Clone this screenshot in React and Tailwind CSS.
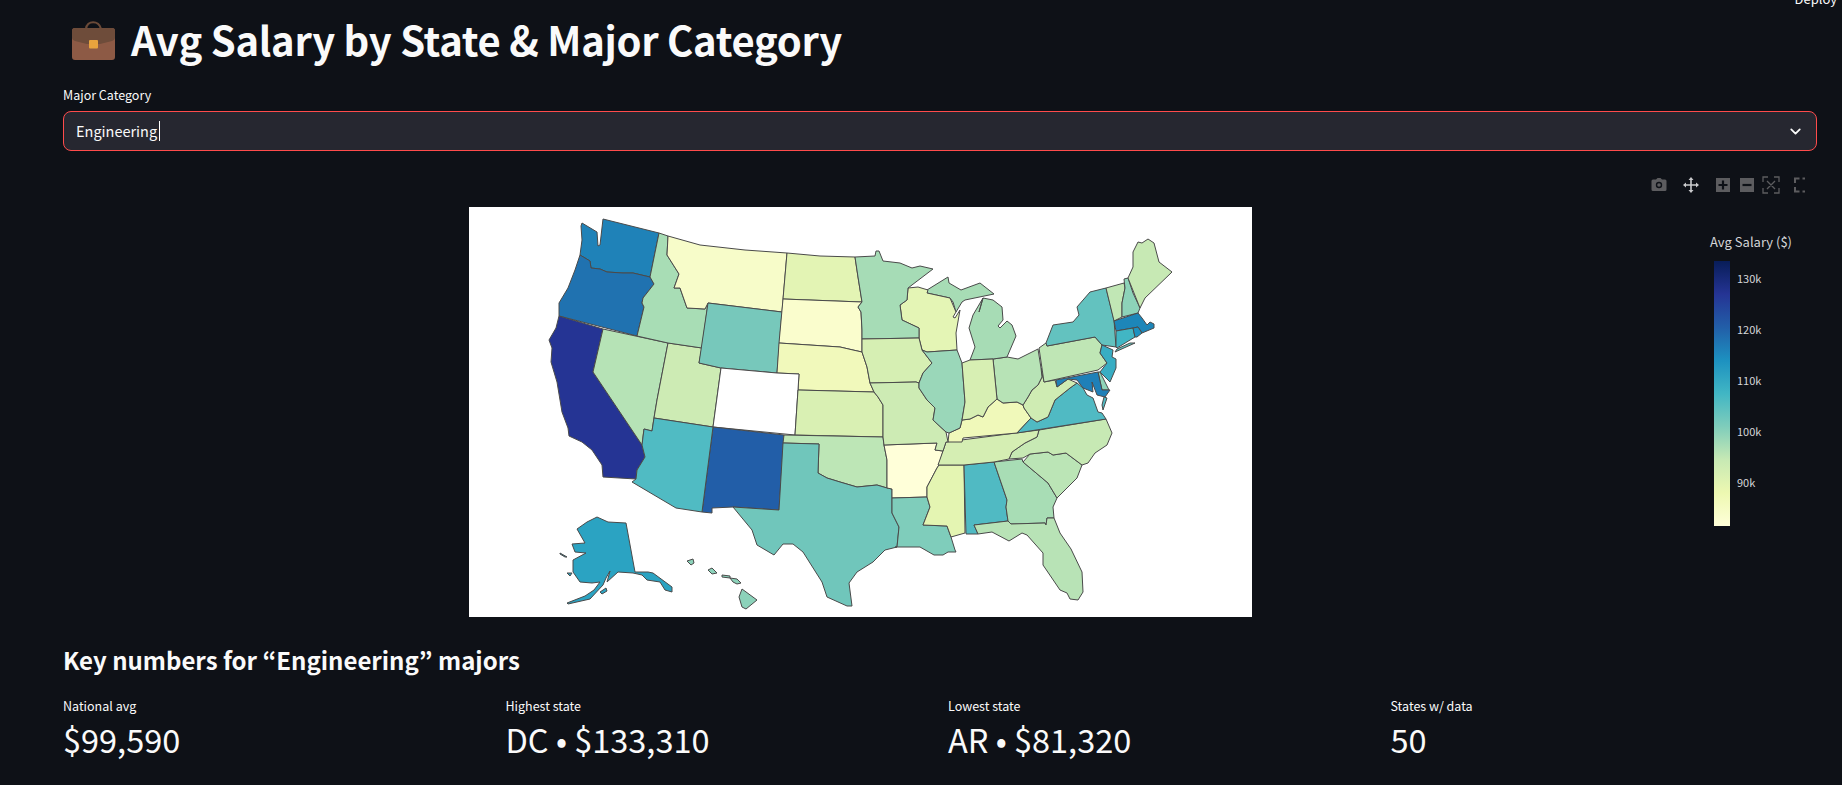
import { ChevronDown } from "lucide-react"

const FONT = "font-['Noto_Sans_CJK_KR','Noto_Sans',sans-serif]"

const states = [
  { id: "WA", fill: "#1f82b8", pts: "582,223 597,232 598,246 600,245 603,219 659,233 650,277 633,273 623,273 607,272 600,269 591,268 590,261 580,255 582,240 581,226" },
  { id: "OR", fill: "#2072b0", pts: "580,255 590,261 591,268 600,269 607,272 623,273 633,273 650,277 654,284 643,298 642,303 644,307 637,336 559,316 559,303 568,288 575,270" },
  { id: "CA", fill: "#253494", pts: "559,316 603,329 593,372 642,445 645,457 637,470 636,479 603,477 602,465 592,450 582,442 569,436 568,428 562,412 558,388 557,382 551,362 552,348 549,340 556,328" },
  { id: "NV", fill: "#b6e3b6", pts: "603,329 668,343 657,400 654,418 652,431 644,429 642,445 593,372" },
  { id: "UT", fill: "#cdebb4", pts: "668,343 702,348 699,363 721,368 713,427 654,418 657,400" },
  { id: "ID", fill: "#a8ddb5", pts: "659,233 668,236 667,255 679,274 674,288 680,288 687,308 705,309 708,303 702,348 668,343 637,336 644,307 642,303 643,298 654,284 650,277" },
  { id: "MT", fill: "#f7fcc9", pts: "668,236 700,245 745,250 787,253 782,312 708,303 705,309 687,308 680,288 674,288 679,274 667,255" },
  { id: "WY", fill: "#77c8bb", pts: "708,303 782,312 777,373 721,368 699,363" },
  { id: "ND", fill: "#e3f4b4", pts: "787,253 820,256 855,257 858,277 862,302 783,299" },
  { id: "SD", fill: "#fafdcd", pts: "783,299 862,302 858,307 861,312 862,330 862,352 853,350 840,347 779,343" },
  { id: "NE", fill: "#f1f9bb", pts: "779,343 840,347 853,350 862,352 867,367 870,383 874,392 798,390 799,374 777,373" },
  { id: "CO", fill: "#ffffff", pts: "721,368 777,373 799,374 798,390 795,435 713,427" },
  { id: "KS", fill: "#d9f0b3", pts: "798,390 874,392 878,397 883,405 883,437 795,435" },
  { id: "NM", fill: "#225ea8", pts: "713,427 784,435 779,510 733,507 712,508 712,513 702,512" },
  { id: "AZ", fill: "#50bbc3", pts: "654,418 713,427 702,512 676,508 632,482 636,479 637,470 645,457 642,445 644,429 652,431" },
  { id: "OK", fill: "#bde6b6", pts: "784,435 883,437 884,445 887,460 887,488 877,485 857,487 840,482 827,478 818,473 819,444 783,443" },
  { id: "TX", fill: "#70c6bb", pts: "783,443 819,444 818,473 827,478 840,482 857,487 877,485 887,488 892,489 892,513 899,527 897,547 885,550 873,562 857,572 849,583 852,606 847,606 827,597 822,582 803,552 793,544 783,544 774,555 757,545 752,530 733,507 779,510" },
  { id: "AR", fill: "#ffffd9", pts: "884,445 937,443 935,450 943,451 939,465 937,468 927,487 927,497 892,498 892,489 887,488 887,460" },
  { id: "LA", fill: "#7fcdbb", pts: "892,498 927,497 930,507 923,525 947,526 951,537 955,550 956,552 948,552 943,555 934,555 920,547 895,547 897,547 899,527 892,513" },
  { id: "MS", fill: "#e4f5b2", pts: "939,465 964,465 965,533 951,537 947,526 923,525 930,507 927,497 927,487 937,468" },
  { id: "AL", fill: "#50bac3", pts: "964,465 994,462 1007,500 1006,507 1008,521 974,525 978,534 966,534" },
  { id: "GA", fill: "#a8ddb5", pts: "994,462 1022,459 1023,462 1048,483 1057,498 1053,507 1054,518 1047,518 1046,525 1045,523 1011,524 1008,521 1006,507 1007,500" },
  { id: "FL", fill: "#b8e3b6", pts: "974,525 1008,521 1011,524 1045,523 1046,525 1047,518 1054,518 1060,533 1071,549 1082,572 1083,592 1078,600 1070,599 1067,593 1060,590 1043,565 1043,553 1027,535 1022,533 1009,541 992,532 978,534" },
  { id: "SC", fill: "#bbe5b6", pts: "1023,462 1030,454 1048,452 1053,455 1066,453 1082,465 1077,478 1057,498 1048,483" },
  { id: "NC", fill: "#c7e9b4", pts: "1106,419 1112,433 1107,445 1095,453 1088,463 1082,465 1066,453 1053,455 1048,452 1030,454 1023,458 1009,459 1012,452 1025,443 1037,437 1039,430" },
  { id: "TN", fill: "#d5eeb3", pts: "1039,430 1037,437 1025,443 1012,452 1009,459 994,462 964,465 938,465 943,451 946,442" },
  { id: "KY", fill: "#f0f9ba", pts: "949,433 960,428 962,420 970,419 978,415 983,417 988,407 997,399 1003,403 1017,402 1023,405 1024,408 1031,418 1017,433 963,438 962,442 948,442" },
  { id: "VA", fill: "#50bac3", pts: "1017,433 1031,418 1037,422 1048,417 1055,400 1070,388 1077,383 1083,388 1087,395 1093,398 1098,412 1102,413 1106,419" },
  { id: "WV", fill: "#cfecb3", pts: "1041,368 1044,382 1055,380 1057,387 1068,379 1077,383 1070,388 1055,400 1048,417 1037,422 1031,418 1024,408 1023,405 1028,397 1032,390 1038,385 1042,377" },
  { id: "OH", fill: "#b7e3b6", pts: "993,359 1007,357 1018,359 1038,349 1041,368 1042,377 1038,385 1032,390 1028,397 1023,405 1017,402 1003,403 997,399" },
  { id: "PA", fill: "#bfe6b5", pts: "1039,348 1046,343 1047,346 1095,337 1102,345 1100,353 1107,363 1098,370 1044,382" },
  { id: "NY", fill: "#63c2bf", pts: "1047,346 1046,343 1053,325 1073,322 1079,315 1077,307 1090,292 1106,288 1114,320 1116,347 1102,345 1095,337" },
  { id: "LI", fill: "#63c2bf", pts: "1115,352 1135,343 1130,343 1117,349" },
  { id: "VT", fill: "#c1e7b5", pts: "1106,288 1124,283 1125,288 1122,303 1122,317 1114,321" },
  { id: "NH", fill: "#8dd3b9", pts: "1124,279 1128,278 1133,293 1140,308 1138,313 1122,317 1122,303 1125,288" },
  { id: "ME", fill: "#c7e9b4", pts: "1128,278 1133,267 1133,252 1138,242 1142,243 1148,239 1154,243 1159,262 1172,272 1145,298 1140,308" },
  { id: "MA", fill: "#1d86b9", pts: "1114,321 1138,313 1142,318 1147,325 1150,322 1154,324 1154,328 1142,333 1138,327 1133,328 1116,331" },
  { id: "CT", fill: "#41b6c4", pts: "1116,331 1133,328 1135,337 1117,348 1116,347" },
  { id: "RI", fill: "#1d91c0", pts: "1133,328 1138,327 1142,333 1137,337 1135,337" },
  { id: "NJ", fill: "#38adc3", pts: "1102,345 1113,350 1112,357 1116,359 1116,368 1110,382 1100,372 1107,363 1100,353" },
  { id: "DE", fill: "#90d5b9", pts: "1098,372 1100,372 1109,390 1102,390" },
  { id: "MD", fill: "#1f80b8", pts: "1056,380 1098,372 1102,390 1110,390 1105,397 1097,395 1092,382 1093,392 1083,388 1077,380 1068,379 1057,387" },
  { id: "VAE", fill: "#50bac3", pts: "1104,397 1107,398 1103,410 1102,405" },
  { id: "MIL", fill: "#a7dcb5", pts: "970,360 975,347 969,328 973,315 983,298 979,312 983,298 993,300 1002,307 1003,320 998,326 1000,328 1007,321 1012,325 1016,336 1007,357 993,359" },
  { id: "MIU", fill: "#a7dcb5", pts: "927,290 948,277 949,283 961,290 980,283 994,294 965,300 962,302 956,312 953,302 950,298 927,293" },
  { id: "WI", fill: "#e4f5b5", pts: "908,288 918,287 928,290 927,293 950,298 956,312 953,317 955,318 960,310 956,333 957,350 927,352 922,350 919,338 919,328 902,320 900,305 907,300" },
  { id: "MN", fill: "#a6dcb6", pts: "855,257 875,256 876,251 879,251 883,261 900,263 912,268 920,266 933,269 908,288 907,300 900,305 902,320 919,328 919,338 862,339 862,330 861,312 858,307 862,302 858,277" },
  { id: "IA", fill: "#d6efb3", pts: "862,339 919,338 922,350 932,363 923,373 919,383 916,382 870,383 867,367 862,352" },
  { id: "MO", fill: "#cdebb4", pts: "870,383 916,382 919,383 919,388 927,400 935,408 933,420 946,432 948,442 946,442 943,451 935,450 937,443 884,445 883,437 883,405 878,397 874,392" },
  { id: "IL", fill: "#9ad7b9", pts: "927,352 957,350 962,363 965,402 962,420 960,428 949,433 946,432 933,420 935,408 927,400 919,388 919,383 923,373 932,363 922,350" },
  { id: "IN", fill: "#d7efb3", pts: "962,363 970,360 993,359 997,399 988,407 983,417 978,415 970,419 962,420 965,402" },
  { id: "AK", fill: "#2ba3c2", pts: "597,517 608,522 626,523 635,572 648,572 653,573 672,587 672,592 665,590 660,582 647,580 642,575 633,573 618,572 607,582 610,571 606,578 603,585 590,599 568,604 567,603 585,596 594,590 600,582 592,583 580,582 573,572 573,560 586,553 575,552 572,544 585,543 577,529 587,522" },
  { id: "AK2", fill: "#2ba3c2", pts: "600,592 606,588 607,591 602,594" },
  { id: "AK3", fill: "#2ba3c2", pts: "567,573 572,573 570,576" },
  { id: "AK4", fill: "#2ba3c2", pts: "560,553 567,557 565,557 560,554" },
  { id: "HI", fill: "#8cd2ba", pts: "742,589 757,600 746,609 742,607 739,597" },
  { id: "HI2", fill: "#8cd2ba", pts: "730,578 737,579 741,583 737,584 733,582" },
  { id: "HI3", fill: "#8cd2ba", pts: "722,575 730,576 730,578 722,577" },
  { id: "HI4", fill: "#8cd2ba", pts: "708,570 712,568 717,573 712,574" },
  { id: "HI5", fill: "#8cd2ba", pts: "687,561 693,559 694,563 691,565" },
]

const metrics = [
  { label: "National avg", value: "$99,590" },
  { label: "Highest state", value: "DC • $133,310" },
  { label: "Lowest state", value: "AR • $81,320" },
  { label: "States w/ data", value: "50" },
]

const ticks = ["130k", "120k", "110k", "100k", "90k"]

function Briefcase() {
  return (
    <svg width="43" height="40" viewBox="0 0 43 40" className="shrink-0">
      <path d="M14 8 C15 -1 27 -1 29 8" fill="none" stroke="#6b4a38" strokeWidth="2.2" />
      <rect x="0" y="7" width="43" height="32" rx="3" fill="#8d5a45" />
      <path d="M0 10 a3 3 0 0 1 3 -3 h37 a3 3 0 0 1 3 3 v7 q0 2 -3 3 l-12 3 h-13 l-12 -3 q-3 -1 -3 -3 z" fill="#6e4c3a" />
      <rect x="17" y="19" width="9" height="8.5" rx="1" fill="#e8a33d" />
    </svg>
  )
}

function Modebar() {
  const dim = "#5c5c5f"
  return (
    <div className="flex justify-end h-[32px] items-center pr-[12px]">
      <svg width="160" height="20" viewBox="1645 175 160 20">
        {/* camera */}
        <path d="M1653 179.500 h3 l1.500 -1.500 h3 l1.500 1.500 h3 a1.500 1.500 0 0 1 1.500 1.500 v8.500 a1.500 1.500 0 0 1 -1.500 1.500 h-12 a1.500 1.500 0 0 1 -1.500 -1.500 v-8.500 a1.500 1.500 0 0 1 1.500 -1.500 z" fill={dim} />
        <circle cx="1659" cy="185" r="3.200" fill="#0e1117" />
        <circle cx="1659" cy="185" r="1.800" fill={dim} />
        {/* pan */}
        <path d="M1691 177 l2.500 3 h-1.700 v4.200 h4.200 v-1.700 l3 2.500 -3 2.500 v-1.700 h-4.200 v4.200 h1.700 l-2.500 3 -2.500 -3 h1.700 v-4.200 h-4.200 v1.700 l-3 -2.500 3 -2.500 v1.700 h4.200 v-4.200 h-1.700 z" fill="#c9cacc" />
        {/* zoom in */}
        <rect x="1716" y="178" width="14" height="14" fill={dim} />
        <path d="M1718.500 185 h9 M1723 180.500 v9" stroke="#0e1117" strokeWidth="2.200" />
        {/* zoom out */}
        <rect x="1740" y="178" width="14" height="14" fill={dim} />
        <path d="M1742.500 185 h9" stroke="#0e1117" strokeWidth="2.200" />
        {/* autoscale */}
        <path d="M1763 182 v-5 h5 M1774 177 h5 v5 M1779 188 v5 h-5 M1768 193 h-5 v-5 M1767 181 l8 8 M1775 181 l-8 8" fill="none" stroke={dim} strokeWidth="1.300" />
        {/* reset */}
        <path d="M1795 183 v-4.500 h4.500 M1802.500 178.500 h4 M1806.500 178.500 v4.500 M1806.500 187 v4.500 h-4 M1799.500 191.500 h-4.500 v-4.500" fill="none" stroke={dim} strokeWidth="2" />
      </svg>
    </div>
  )
}

function UsMap() {
  return (
    <svg width="783" height="410" viewBox="469 207 783 410" className="bg-white block">
      {states.map((s) => (
        <polygon key={s.id} points={s.pts} fill={s.fill} stroke="#4a4a4a" strokeWidth="1" strokeLinejoin="round" />
      ))}
    </svg>
  )
}

function Colorbar() {
  return (
    <div className="absolute left-[1647px] top-[63px] w-[110px] text-[#d4d5d8]">
      <div className="text-[13px] leading-[20px] whitespace-nowrap">Avg Salary ($)</div>
      <div className="flex gap-[7px] mt-[9px] ml-[4px]">
        <div className="w-[16px] h-[265px] bg-[linear-gradient(to_top,#ffffd9,#edf8b1_12.500%,#c7e9b4_25%,#7fcdbb_37.500%,#41b6c4_50%,#1d91c0_62.500%,#225ea8_75%,#253494_87.500%,#081d58)]" />
        <div className="flex flex-col gap-[33px] pt-[8px] text-[11px] leading-[18px]">
          {ticks.map((t) => (
            <div key={t}>{t}</div>
          ))}
        </div>
      </div>
    </div>
  )
}

export default function App() {
  return (
    <div className={`${FONT} relative h-[785px] overflow-hidden bg-[#0e1117] text-[#fafafa] pl-[63px] pr-[25px]`}>
      <div className="absolute right-[5px] top-[-11px] text-[13px] leading-[20px]">Deploy</div>

      <div className="flex items-center gap-[16px] pl-[9px] h-[82px]">
        <Briefcase />
        <h1 className="text-[40px] leading-[56px] font-bold tracking-[-0.3px] whitespace-nowrap -translate-y-[2px]">Avg Salary by State &amp; Major Category</h1>
      </div>

      <label className="block text-[12.500px] leading-[20px] mt-[3px]">Major Category</label>
      <div className="flex items-center justify-between h-[40px] mt-[6px] px-[12px] bg-[#262730] border border-[#ff4b4b] rounded-[8px]">
        <div className="flex items-center text-[14.500px]">
          Engineering
          <span className="w-px h-[20px] bg-white ml-[2px]" />
        </div>
        <ChevronDown size={17} strokeWidth={2.500} />
      </div>

      <div className="relative h-[466px] mt-[18px]">
        <Modebar />
        <div className="pl-[406px] pt-[6px]">
          <UsMap />
        </div>
        <Colorbar />
      </div>

      <h2 className="text-[24px] leading-[36px] font-semibold mt-[7px]">Key numbers for “Engineering” majors</h2>
      <div className="grid grid-cols-4 gap-[16px] mt-[18px]">
        {metrics.map((m) => (
          <div key={m.label}>
            <div className="text-[12.500px] leading-[20px]">{m.label}</div>
            <div className="text-[32.500px] leading-[46px]">{m.value}</div>
          </div>
        ))}
      </div>
    </div>
  )
}
